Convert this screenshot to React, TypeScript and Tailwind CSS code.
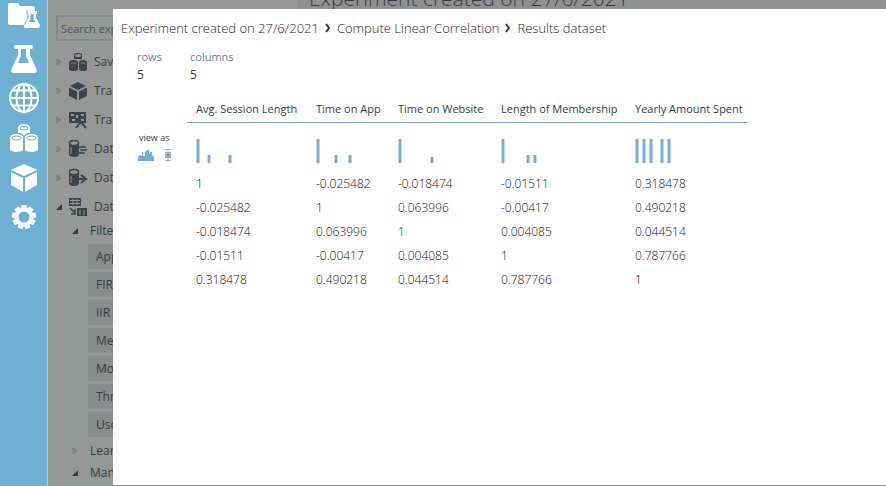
import React from "react";

const columns = [
  { name: "Avg. Session Length", width: "w-[120px]", bars: [[0, 24], [11, 8], [32, 8]] },
  { name: "Time on App", width: "w-[82px]", bars: [[0, 24], [18, 8], [32, 8]] },
  { name: "Time on Website", width: "w-[103px]", bars: [[0, 24], [32, 6]] },
  { name: "Length of Membership", width: "w-[134px]", bars: [[0, 24], [25, 8], [32, 8]] },
  { name: "Yearly Amount Spent", width: "w-[122px]", bars: [[0, 24], [7, 24], [14, 24], [25, 24], [32, 24]] },
];

const rows = [
  ["1", "-0.025482", "-0.018474", "-0.01511", "0.318478"],
  ["-0.025482", "1", "0.063996", "-0.00417", "0.490218"],
  ["-0.018474", "0.063996", "1", "0.004085", "0.044514"],
  ["-0.01511", "-0.00417", "0.004085", "1", "0.787766"],
  ["0.318478", "0.490218", "0.044514", "0.787766", "1"],
];

const filters = [
  "Apply Filter",
  "FIR Filter",
  "IIR Filter",
  "Median Filter",
  "Moving Average Filter",
  "Threshold Filter",
  "User Defined Filter",
];

function ProjectsIcon() {
  return (
    <svg width="32" height="26" viewBox="0 0 32 26" fill="#fff">
      <path d="M0 3q0-2 2-2h8l2 3h12q3 0 3 2v3h-8v3h2v4l-4 7H2q-2 0-2-2z" />
      <path d="M19 9h10v3h-1v4l4 7q0 3-2 3H18q-3 0-2-3l4-7v-4h-1z" />
      <path d="M22.500 12v5l-2 3h7l-2-3v-5z" fill="#6eb0d2" />
      <path d="M19 8v4h1v4l-4 7" fill="none" stroke="#6eb0d2" />
    </svg>
  );
}

function ExperimentsIcon() {
  return (
    <svg width="26" height="30" viewBox="0 0 26 30" fill="#fff">
      <path d="M4 1h17q2 2 0 4h-2v6l6 13q2 5-2 5H3q-4 0-2-5l6-13V5H4q-2-2 0-4z" />
      <path d="M10 5v7l-3 7h11l-3-7V5z" fill="#6eb0d2" />
    </svg>
  );
}

function GlobeIcon() {
  return (
    <svg width="32" height="32" viewBox="0 0 32 32" fill="none" stroke="#fff" strokeWidth="2">
      <circle cx="16" cy="16" r="14" />
      <ellipse cx="16" cy="16" rx="7.5" ry="14" />
      <path d="M16 2v28M2 16h28M5 8.5h22M5 23.5h22" />
    </svg>
  );
}

function DatasetsIcon() {
  return (
    <svg width="28" height="29" viewBox="0 0 28 29" fill="#fff">
      <path d="M8 4q0-4 6-4t6 4v5q-6 0-6 4 0-4-6-4z" />
      <path d="M0 14q0-4 6.500-4t6.500 4v11q0 3-6.500 3T0 25zM15 14q0-4 6.500-4t6.500 4v11q0 3-6.500 3T15 25z" />
      <g fill="none" stroke="#6eb0d2">
        <ellipse cx="14" cy="4" rx="4" ry="2" />
        <ellipse cx="6.500" cy="14" rx="4.500" ry="2" />
        <ellipse cx="21.500" cy="14" rx="4.500" ry="2" />
      </g>
    </svg>
  );
}

function ModelsIcon() {
  return (
    <svg width="28" height="30" viewBox="0 0 28 30" fill="#fff">
      <path d="M14 1 27 7 14 13 1 7zM1 9l12 6v14L1 22zM27 9l-12 6v14l12-7z" />
    </svg>
  );
}

function SettingsIcon() {
  return (
    <svg width="26" height="26" viewBox="0 0 26 26">
      <circle cx="13" cy="13" r="7.500" fill="none" stroke="#fff" strokeWidth="4" />
      <g fill="#fff">
        {[0, 40, 80, 120, 160, 200, 240, 280, 320].map((a) => (
          <path key={a} d="M10 5l.5-4h5l.5 4z" transform={`rotate(${a} 13 13)`} />
        ))}
      </g>
    </svg>
  );
}

function Cylinder() {
  return (
    <>
      <path d="M1 4v11q0 3 5 3t5-3V4z" fill="#3a444b" />
      <ellipse cx="6" cy="4" rx="4.500" ry="2.500" fill="#959897" stroke="#3a444b" strokeWidth="1.500" />
      <path d="M3 8v7" stroke="#959897" />
    </>
  );
}

function TreeIcon({ kind }: { kind: string }) {
  return (
    <svg width="20" height="20" viewBox="0 0 20 20" fill="#3a444b" className="shrink-0">
      {kind === "saved" && (
        <>
          <path d="M6 3q0-2 4-2t4 2v4H6zM1 11q0-3 4.500-3T10 11v6q0 2-4.500 2T1 17zM11 11q0-3 4-3t4 3v6q0 2-4 2t-4-2z" />
          <ellipse cx="10" cy="3.500" rx="3" ry="1.500" fill="#959897" />
          <path d="M3 11h5M13 11h4" stroke="#6f8896" />
        </>
      )}
      {kind === "trained" && <path d="m10 1 8 4-8 4-8-4zM1 6.500l8 4V19l-8-4zM19 6.500l-8 4V19l8-4z" />}
      {kind === "transforms" && (
        <>
          <path d="M1 2h17v11H1z" />
          <path d="M3 4h3v2H3zM8 5h2v3H8zM13 4h3v2h-3zM4 9h3v2H4zM13 9h3v2h-3z" fill="#959897" />
          <path d="m11 10 7 8M8 18l4-5" stroke="#3a444b" strokeWidth="2" />
        </>
      )}
      {kind === "convert" && (
        <>
          <Cylinder />
          <path d="M10 8h8M12 11h7M10 14h7" stroke="#3a444b" strokeWidth="1.500" />
        </>
      )}
      {kind === "io" && (
        <>
          <Cylinder />
          <path d="M9 11h7M13 7l5 4-5 4" fill="none" stroke="#3a444b" strokeWidth="2" />
        </>
      )}
      {kind === "transformation" && (
        <>
          <path d="M1 1h12v8H1zM9 11h10v8H9z" />
          <path d="M2 3.500h10M2 6.500h10M5 2v6M9 2v6M12 13v5M16 13v5" stroke="#959897" />
          <path d="m2 11 5 5M7 12v5H3" fill="none" stroke="#3a444b" strokeWidth="1.500" />
        </>
      )}
    </svg>
  );
}

function Arrow({ open = false }: { open?: boolean }) {
  return (
    <svg width="6" height="8" viewBox="0 0 6 8" className="shrink-0">
      {open ? <path d="M6 1v6H0z" fill="#343d42" /> : <path d="M1 1l4 3-4 3z" fill="#858a8c" stroke="#747b7e" />}
    </svg>
  );
}

const categories = [
  ["saved", "Saved Datasets"],
  ["trained", "Trained Models"],
  ["transforms", "Transforms"],
  ["convert", "Data Format Conversions"],
  ["io", "Data Input and Output"],
  ["transformation", "Data Transformation"],
];

const navItems: [string, React.ReactNode, string][] = [
  ["Projects", <ProjectsIcon />, "h-[30px]"],
  ["Experiments", <ExperimentsIcon />, "h-[58px]"],
  ["Web services", <GlobeIcon />, "h-[20px]"],
  ["Datasets", <DatasetsIcon />, "h-[60px]"],
  ["Trained models", <ModelsIcon />, "h-[20px]"],
  ["Settings", <SettingsIcon />, "h-[58px]"],
];

function Chevron() {
  return (
    <svg width="8" height="10" viewBox="0 0 8 10" fill="none" stroke="#2f383d" strokeWidth="2">
      <path d="m2 1 3 4-3 4" />
    </svg>
  );
}

function Breadcrumb() {
  return (
    <nav
      aria-label="Breadcrumb"
      className="flex items-center gap-[5px] text-[13px] leading-5 font-light whitespace-nowrap text-[#1c2429]"
    >
      <a href="#experiment">Experiment created on 27/6/2021</a>
      <Chevron />
      <a href="#correlation">Compute Linear Correlation</a>
      <Chevron />
      <span>Results dataset</span>
    </nav>
  );
}

function Histogram({ bars }: { bars: number[][] }) {
  return (
    <svg width="38" height="24" viewBox="0 0 38 24" fill="#78aecb" className="block">
      {bars.map(([x, h]) => (
        <rect key={x} x={x + 0.5} y={24 - h} width="3" height={h} />
      ))}
    </svg>
  );
}

export default function App() {
  return (
    <div className="relative flex h-screen overflow-hidden bg-[#8e9190] font-['Open_Sans','Noto_Sans',sans-serif] text-[#343d42]">
      <nav aria-label="Main" className="flex w-12 shrink-0 flex-col border-r border-[#b9c6cc] bg-[#6eb0d2]">
        {navItems.map(([label, icon, height]) => (
          <button key={label} aria-label={label} className={`flex shrink-0 items-center justify-center ${height}`}>
            {icon}
          </button>
        ))}
      </nav>

      <aside className="w-[249px] shrink-0 bg-[#959897] pt-[15px] text-xs font-medium">
        <input
          aria-label="Search experiment items"
          placeholder="Search experiment items"
          className="ml-2 block h-[26px] w-[230px] border-2 border-[#858888] px-[3px] text-[11px] font-normal placeholder:text-[#4c5458]"
        />
        <div className="pt-1.5">
          {categories.map(([kind, label]) => (
            <button key={kind} className="flex h-[29px] w-full items-center pl-2 text-left whitespace-nowrap">
              <Arrow open={kind === "transformation"} />
              <span className="pr-1.5 pl-1.5">
                <TreeIcon kind={kind} />
              </span>
              {label}
            </button>
          ))}
        </div>
        <button className="flex h-5 items-center gap-3 pl-6">
          <Arrow open />
          Filter
        </button>
        <ul className="my-[3px] flex flex-col gap-[3px] pl-10">
          {filters.map((name) => (
            <li key={name} className="flex h-[25px] items-center bg-[#898c8d] pl-2">
              {name}
            </li>
          ))}
        </ul>
        <button className="flex h-[22px] items-center gap-3 pl-6">
          <Arrow />
          Learning with Counts
        </button>
        <button className="flex h-[22px] items-center gap-3 pl-6">
          <Arrow open />
          Manipulation
        </button>
      </aside>

      <main className="min-w-0 flex-1 pl-3">
        <h1 className="-mt-[18px] text-[21px] leading-8 font-light whitespace-nowrap">Experiment created on 27/6/2021</h1>
      </main>

      <section
        role="dialog"
        aria-label="Results dataset"
        className="absolute top-[9px] right-0 bottom-px left-[113px] bg-white px-2 pt-[9px]"
      >
        <Breadcrumb />
        <dl className="mt-2.5 flex pl-4 text-xs leading-[18px]">
          <div className="w-[53px]">
            <dt className="text-[11px] font-medium text-[#5a859c]">rows</dt>
            <dd>5</dd>
          </div>
          <div>
            <dt className="text-[11px] font-medium text-[#5a859c]">columns</dt>
            <dd>5</dd>
          </div>
        </dl>
        <table className="mt-3 ml-4 w-[611px] table-fixed border-separate border-spacing-0 text-left">
          <thead>
            <tr className="text-[11px]">
              <td className="w-[50px] p-0" />
              {columns.map((c) => (
                <th
                  key={c.name}
                  scope="col"
                  className={`h-[27px] border-b border-[#78a5bd] p-0 pl-[9px] font-medium whitespace-nowrap ${c.width}`}
                >
                  {c.name}
                </th>
              ))}
            </tr>
          </thead>
          <tbody className="text-xs">
            <tr>
              <td className="h-[49px] p-0 align-top">
                <div className="pt-[7px] pl-0.5 text-[9px] leading-4">view as</div>
                <div className="flex gap-2 pt-0.5">
                  <button aria-label="Histogram">
                    <svg width="18" height="14" viewBox="0 0 18 14" fill="#6eb0d2">
                      <path d="M1 13V9l2-2 2 1V4h1v4h2V4l2-2h2v4h1V4h2v3l2 2v4z" />
                    </svg>
                  </button>
                  <button aria-label="Box plot">
                    <svg width="10" height="14" viewBox="0 0 10 14" fill="none" stroke="#9fb0b8">
                      <path d="M2 1.500h6M2 12.500h6M5 2v10" />
                      <rect x="2.500" y="4.500" width="5" height="5" fill="#b9c3c7" />
                      <circle cx="5" cy="7" r="1" stroke="#66777f" />
                    </svg>
                  </button>
                </div>
              </td>
              {columns.map((c) => (
                <td key={c.name} className="p-0 pt-4 pl-[9px] align-top">
                  <Histogram bars={c.bars} />
                </td>
              ))}
            </tr>
            {rows.map((row, i) => (
              <tr key={i}>
                <td className="p-0" />
                {row.map((value, j) => (
                  <td key={j} className="h-6 p-0 pl-[9px] leading-6 font-light text-[#10181c]">
                    {value}
                  </td>
                ))}
              </tr>
            ))}
          </tbody>
        </table>
      </section>
    </div>
  );
}
